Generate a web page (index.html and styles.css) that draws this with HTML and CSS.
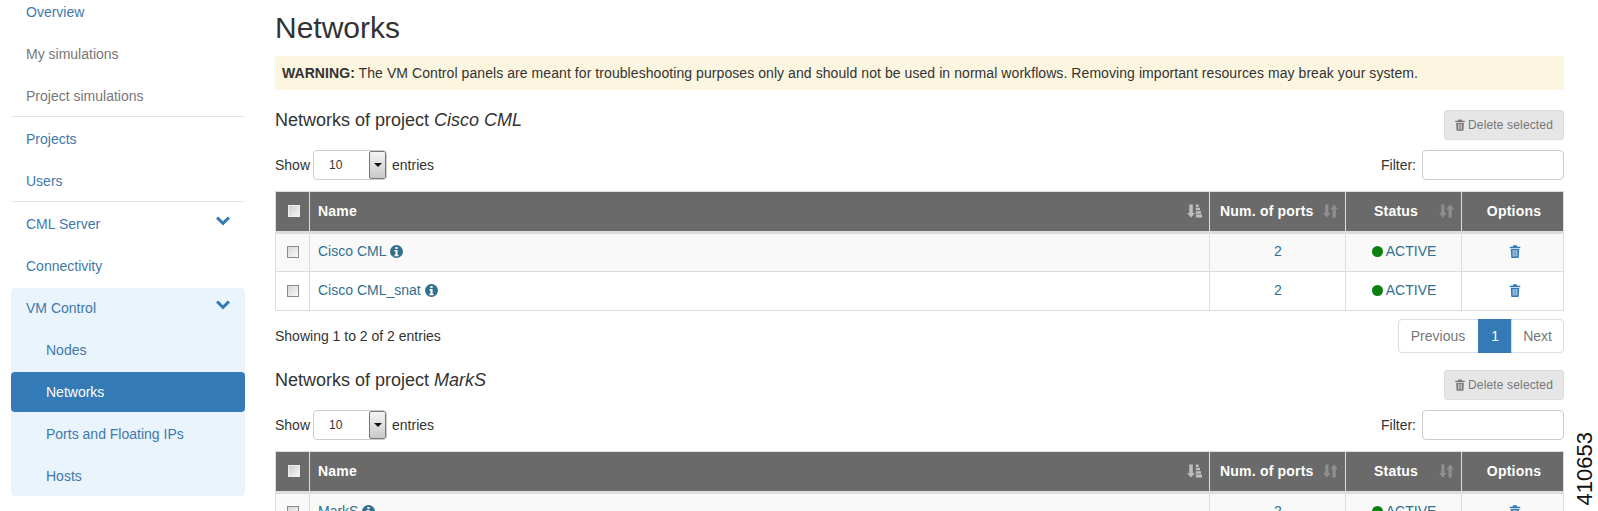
FILE: index.html
```html
<!DOCTYPE html>
<html lang="en">
<head>
<meta charset="utf-8">
<title>Networks</title>
<link rel="stylesheet" href="styles.css">
</head>
<body>
<svg class="defs" width="0" height="0" aria-hidden="true">
  <symbol id="trash" viewBox="0 0 12 14"><path d="M4.2 0.4h3.6l.7 1.5H11.7v1.5H.3V1.9h3zM1.4 4.2h9.2l-.5 9.1q0 .7-.8.7H2.7q-.8 0-.8-.7zM3.6 5.5v7h.8v-7zM5.6 5.5v7h.8v-7zM7.6 5.5v7h.8v-7z" fill-rule="evenodd"/></symbol>
  <symbol id="info" viewBox="0 0 14 14"><path d="M7 0a7 7 0 1 0 0 14a7 7 0 0 0 0-14zM5.8 2.2h2.4v2.1H5.8zM4.8 5.5h3.4v5h1v1.6H4.8v-1.6h1V7.1h-1z" fill-rule="evenodd"/></symbol>
  <symbol id="chev" viewBox="0 0 14 10"><path d="M0 2.6 2.2.4 7 5.2 11.8.4 14 2.6 7 9.6z"/></symbol>
  <symbol id="sorted" viewBox="0 0 16 14"><path d="M2.4 0h3.8v9h2.4L4.3 14 0 9h2.4zM9.4 0h3v2.6h-3zM9.4 3.6h4.5v2.6H9.4zM9.4 7.2h5.6v2.6H9.4zM9.4 10.8h6.6V14H9.4z"/></symbol>
  <symbol id="sort" viewBox="0 0 16 14"><path d="M2.4 0h3.4v9h2.4L4.1 14 0 9h2.4zM10.2 14h3.4V5H16L11.9 0 7.8 5h2.4z"/></symbol>
</svg>
<div class="page">
  <nav class="sidebar">
    <a class="item">Overview</a>
    <a class="item muted">My simulations</a>
    <a class="item muted">Project simulations</a>
    <div class="divider"></div>
    <a class="item">Projects</a>
    <a class="item">Users</a>
    <div class="divider"></div>
    <a class="item">CML Server<svg class="chev"><use href="#chev"/></svg></a>
    <a class="item">Connectivity</a>
    <div class="group">
      <a class="item">VM Control<svg class="chev"><use href="#chev"/></svg></a>
      <a class="item sub">Nodes</a>
      <a class="item sub active">Networks</a>
      <a class="item sub">Ports and Floating IPs</a>
      <a class="item sub">Hosts</a>
    </div>
  </nav>
  <main class="main">
    <h1 class="title">Networks</h1>
    <div class="warning"><strong>WARNING:</strong> The VM Control panels are meant for troubleshooting purposes only and should not be used in normal workflows. Removing important resources may break your system.</div>

    <section class="section">
      <div class="head">
        <h4 class="subtitle">Networks of project <em>Cisco CML</em></h4>
        <button class="delete"><svg class="i-trash-sm"><use href="#trash"/></svg> Delete selected</button>
      </div>
      <div class="controls">
        <div class="show">Show <span class="select"><span class="value">10</span><span class="arrow"></span></span> entries</div>
        <div class="filter">Filter: <span class="filter-input"></span></div>
      </div>
      <table class="grid">
        <colgroup><col class="c1"><col><col class="c3"><col class="c4"><col class="c5"></colgroup>
        <thead>
          <tr>
            <th><span class="check head-check"></span></th>
            <th class="left"><div class="th-in">Name<svg class="sort strong"><use href="#sorted"/></svg></div></th>
            <th><div class="th-in">Num. of ports<svg class="sort"><use href="#sort"/></svg></div></th>
            <th><div class="th-in status-head"><span>Status</span><svg class="sort"><use href="#sort"/></svg></div></th>
            <th>Options</th>
          </tr>
        </thead>
        <tbody>
          <tr>
            <td><span class="check"></span></td>
            <td class="left">Cisco CML <svg class="info"><use href="#info"/></svg></td>
            <td>2</td>
            <td><span class="dot"></span> ACTIVE</td>
            <td><svg class="i-trash"><use href="#trash"/></svg></td>
          </tr>
          <tr>
            <td><span class="check"></span></td>
            <td class="left">Cisco CML_snat <svg class="info"><use href="#info"/></svg></td>
            <td>2</td>
            <td><span class="dot"></span> ACTIVE</td>
            <td><svg class="i-trash"><use href="#trash"/></svg></td>
          </tr>
        </tbody>
      </table>
      <div class="foot">
        <span>Showing 1 to 2 of 2 entries</span>
        <div class="pager"><a class="pg">Previous</a><a class="pg current">1</a><a class="pg">Next</a></div>
      </div>
    </section>

    <section class="section">
      <div class="head">
        <h4 class="subtitle">Networks of project <em>MarkS</em></h4>
        <button class="delete"><svg class="i-trash-sm"><use href="#trash"/></svg> Delete selected</button>
      </div>
      <div class="controls">
        <div class="show">Show <span class="select"><span class="value">10</span><span class="arrow"></span></span> entries</div>
        <div class="filter">Filter: <span class="filter-input"></span></div>
      </div>
      <table class="grid">
        <colgroup><col class="c1"><col><col class="c3"><col class="c4"><col class="c5"></colgroup>
        <thead>
          <tr>
            <th><span class="check head-check"></span></th>
            <th class="left"><div class="th-in">Name<svg class="sort strong"><use href="#sorted"/></svg></div></th>
            <th><div class="th-in">Num. of ports<svg class="sort"><use href="#sort"/></svg></div></th>
            <th><div class="th-in status-head"><span>Status</span><svg class="sort"><use href="#sort"/></svg></div></th>
            <th>Options</th>
          </tr>
        </thead>
        <tbody>
          <tr>
            <td><span class="check"></span></td>
            <td class="left">MarkS <svg class="info"><use href="#info"/></svg></td>
            <td>2</td>
            <td><span class="dot"></span> ACTIVE</td>
            <td><svg class="i-trash"><use href="#trash"/></svg></td>
          </tr>
        </tbody>
      </table>
    </section>
  </main>
</div>
<div class="figure-id">410653</div>
</body>
</html>
```
FILE: styles.css
```css
* { box-sizing: border-box; }
html, body { margin: 0; height: 511px; overflow: hidden; background: #fff; }
body { font-family: "Liberation Sans", Arial, sans-serif; font-size: 14px; line-height: 20px; color: #333; position: relative; }
.defs { position: absolute; }
.page { display: flex; align-items: flex-start; height: 511px; overflow: hidden; }

.sidebar { flex: 0 0 234px; margin-left: 11px; margin-top: -8px; display: flex; flex-direction: column; gap: 2px; }
.item { display: flex; align-items: center; justify-content: space-between; height: 40px; padding: 0 15px; color: #3f78ad; border-radius: 4px; }
.item.muted { color: #777; }
.item.sub { padding-left: 35px; }
.item.active { background: #337ab7; color: #fff; }
.divider { height: 1px; background: #e5e5e5; margin-top: -2px; }
.group { display: flex; flex-direction: column; gap: 2px; background: #eaf4fc; border-radius: 4px; }
.chev { width: 14px; height: 10px; fill: #337ab7; margin-top: -6px; }

.main { width: 1289px; margin-left: 30px; flex: none; }
.title { font-size: 30px; font-weight: 400; line-height: 36px; margin: 10px 0; color: #333; }
.warning { background: #fcf6e1; height: 34px; line-height: 34px; padding: 0 7px; font-size: 14px; letter-spacing: .07px; margin-bottom: 20px; }
.section { margin-bottom: 17px; }
.head { display: flex; justify-content: space-between; align-items: flex-start; }
.subtitle { font-size: 18px; font-weight: 400; line-height: 20px; margin: 0; }
.delete { width: 120px; height: 30px; border: 1px solid #ddd; border-radius: 3px; background: #e6e6e6; color: #777; font: 12px/18px "Liberation Sans", Arial, sans-serif; letter-spacing: .15px; padding: 0; display: flex; align-items: center; justify-content: center; gap: 3px; }
.i-trash-sm { width: 10px; height: 12px; fill: #777; }

.controls { display: flex; justify-content: space-between; align-items: center; height: 30px; margin-top: 10px; margin-bottom: 11px; }
.show { display: flex; align-items: center; gap: 3px; }
.filter { display: flex; align-items: center; gap: 6px; }
.select { width: 74px; height: 30px; border: 1px solid #ccc; border-radius: 4px; display: flex; justify-content: space-between; background: #fff; margin-right: 2px; overflow: hidden; }
.value { font-size: 12px; padding-left: 15px; line-height: 28px; }
.arrow { width: 17px; height: 28px; border: 1px solid #777; border-radius: 2px; background: linear-gradient(#f4f4f4, #c9c9c9); position: relative; }
.arrow::after { content: ""; position: absolute; left: 4px; top: 11px; border: 4px solid transparent; border-top: 4px solid #111; }
.filter-input { width: 142px; height: 30px; border: 1px solid #ccc; border-radius: 4px; background: #fff; }

.grid { width: 1289px; table-layout: fixed; border-collapse: collapse; }
.c1 { width: 34px; } .c3 { width: 136px; } .c4 { width: 116px; } .c5 { width: 102px; }
.grid th { height: 41px; background: #6a6a6a; color: #fff; font-weight: 700; font-size: 14px; letter-spacing: .2px; padding: 0 7px 2px 10px; text-align: center; border: 1px solid #ddd; border-bottom: 3px solid #ddd; }
.grid td { height: 39px; padding: 0 8px 3px 9px; text-align: center; color: #31708f; border: 1px solid #ddd; }
.grid tbody tr:nth-child(odd) td { background: #f9f9f9; }
.grid th.left, .grid td.left { text-align: left; padding-left: 8px; }
.th-in { display: flex; justify-content: space-between; align-items: center; }
.status-head span { padding-left: 18px; }
.sort { width: 15px; height: 14px; fill: #8f8f8f; }
.sort.strong { fill: #bdbdbd; }
.check { display: inline-block; width: 12px; height: 12px; border: 1px solid #8a8a8a; background: linear-gradient(135deg, #d8d8d8, #f8f8f8); vertical-align: middle; }
.head-check { background: linear-gradient(135deg, #cfcfcf, #f4f4f4); border-color: #eee; margin-bottom: 2px; }
.info { width: 13px; height: 13px; fill: #31708f; vertical-align: -2px; }
.i-trash { width: 12px; height: 13px; fill: #337ab7; vertical-align: -2px; margin-left: 3px; }
.dot { display: inline-block; width: 11px; height: 11px; border-radius: 50%; background: #0a8010; vertical-align: -1px; }

.foot { display: flex; justify-content: space-between; align-items: center; margin-top: 8px; height: 34px; }
.pager { display: flex; }
.pg { height: 34px; line-height: 32px; padding: 0 11px; border: 1px solid #ddd; color: #777; margin-left: -1px; }
.pg:first-child { border-radius: 4px 0 0 4px; padding: 0 13px 0 12px; }
.pg:last-child { border-radius: 0 4px 4px 0; }
.pg.current { background: #337ab7; border-color: #337ab7; color: #fff; min-width: 34px; text-align: center; }

.figure-id { position: absolute; left: 1575px; top: 432px; width: 20px; font-size: 22px; line-height: 20px; color: #111; writing-mode: vertical-rl; transform: rotate(180deg); white-space: nowrap; }
```
